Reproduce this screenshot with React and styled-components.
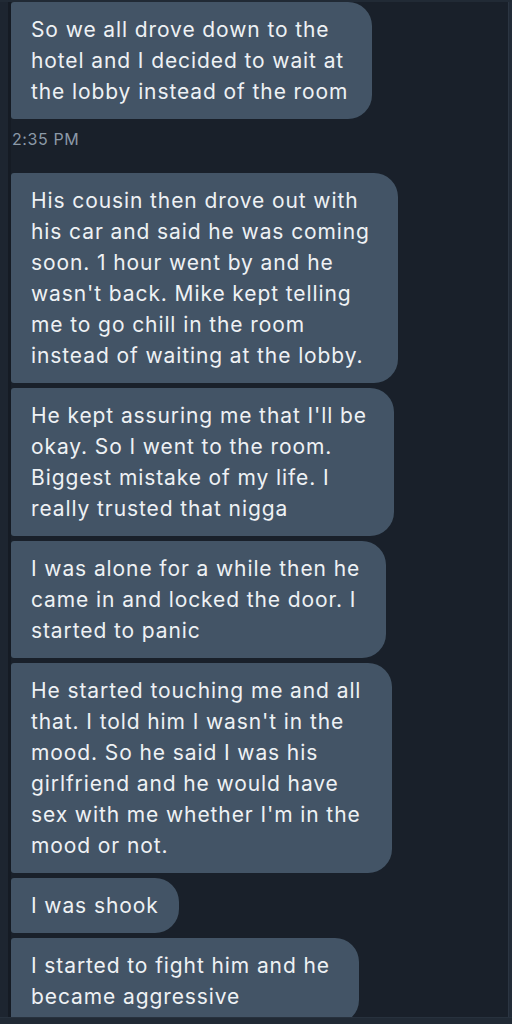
import React from "react";
import styled, { createGlobalStyle } from "styled-components";

const Global = createGlobalStyle`
  html, body {
    margin: 0;
    padding: 0;
    background: #19202a;
  }
`;

const Screen = styled.div`
  width: 512px;
  height: 1024px;
  display: flex;
  flex-direction: column;
  background-color: #19202a;
  overflow: hidden;
`;

const TopEdge = styled.div`
  height: 2px;
  flex-shrink: 0;
  background-color: #212a35;
`;

const BottomEdge = styled.div`
  height: 6px;
  flex-shrink: 0;
  background-color: #212a35;
  border-top: 1px solid #27313d;
`;

const Body = styled.div`
  flex: 1;
  display: flex;
  min-height: 0;
`;

const LeftRail = styled.div`
  width: 8px;
  flex-shrink: 0;
  background-color: #1d2530;
  border-right: 3px solid #151b24;
`;

const RightRail = styled.div`
  width: 3px;
  flex-shrink: 0;
  background-color: #222b37;
  border-left: 1px solid #2b3542;
`;

const Thread = styled.div`
  flex: 1;
  min-width: 0;
  display: flex;
  flex-direction: column;
  align-items: flex-start;
  gap: 5px;
  overflow: hidden;
`;

const Bubble = styled.div`
  box-sizing: border-box;
  width: ${({ w }) => w}px;
  flex-shrink: 0;
  padding: 12px 10px 12px 20px;
  background-color: #435466;
  border-radius: 3px 24px 24px 3px;
  color: #eef1f4;
  font-family: Inter, "Helvetica Neue", "Liberation Sans", sans-serif;
  font-size: 21px;
  letter-spacing: 0.9px;
  line-height: 31px;
  white-space: pre;
`;

const Stamp = styled.div`
  flex-shrink: 0;
  margin: 5px 0 19px 1px;
  height: 20px;
  line-height: 20px;
  color: #8c99a7;
  font-family: Inter, "Helvetica Neue", "Liberation Sans", sans-serif;
  font-size: 16px;
  letter-spacing: 0.6px;
`;

const messages = [
  {
    w: 361,
    text: "So we all drove down to the\nhotel and I decided to wait at\nthe lobby instead of the room",
  },
  { stamp: "2:35 PM" },
  {
    w: 387,
    text: "His cousin then drove out with\nhis car and said he was coming\nsoon. 1 hour went by and he\nwasn't back. Mike kept telling\nme to go chill in the room\ninstead of waiting at the lobby.",
  },
  {
    w: 383,
    text: "He kept assuring me that I'll be\nokay. So I went to the room.\nBiggest mistake of my life. I\nreally trusted that nigga",
  },
  {
    w: 375,
    text: "I was alone for a while then he\ncame in and locked the door. I\nstarted to panic",
  },
  {
    w: 381,
    text: "He started touching me and all\nthat. I told him I wasn't in the\nmood. So he said I was his\ngirlfriend and he would have\nsex with me whether I'm in the\nmood or not.",
  },
  { w: 168, text: "I was shook" },
  {
    w: 348,
    text: "I started to fight him and he\nbecame aggressive",
  },
];

export default function App() {
  return (
    <Screen>
      <Global />
      <TopEdge />
      <Body>
        <LeftRail />
        <Thread>
          {messages.map((m, i) =>
            m.stamp ? (
              <Stamp key={i}>{m.stamp}</Stamp>
            ) : (
              <Bubble key={i} w={m.w}>
                {m.text}
              </Bubble>
            )
          )}
        </Thread>
        <RightRail />
      </Body>
      <BottomEdge />
    </Screen>
  );
}
